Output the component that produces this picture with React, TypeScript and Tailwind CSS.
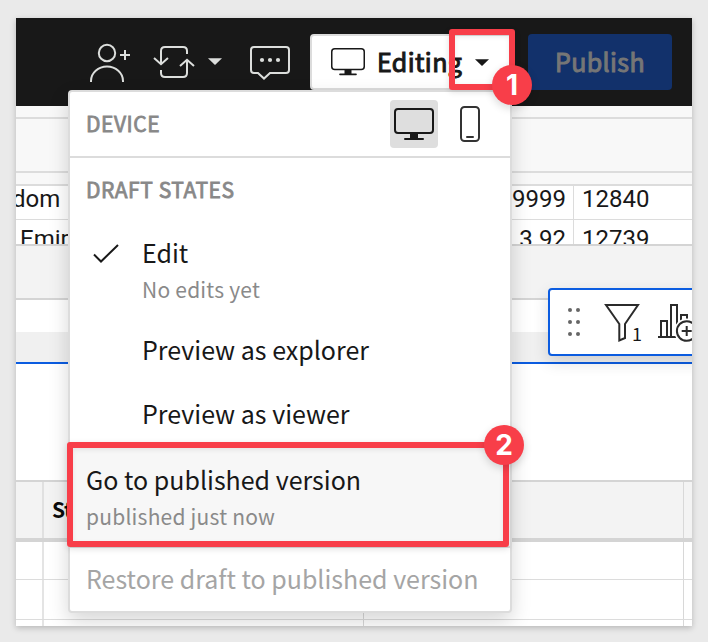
import type { ReactNode } from "react";

const SANS = "font-['Noto_Sans_CJK_SC','Noto_Sans',sans-serif]";

function AddUserIcon() {
  return (
    <svg width="42" height="42" viewBox="0 0 42 42" fill="none" stroke="#dcdedc" strokeWidth="2">
      <circle cx="17" cy="11" r="8.2" />
      <path d="M1 40v-1a16 14.5 0 0 1 32 0v1M30 13h10M35 8v10" />
    </svg>
  );
}

function SyncIcon() {
  return (
    <svg width="42" height="34" viewBox="0 0 42 34" className="overflow-visible" fill="none" stroke="#dcdedc" strokeWidth="2">
      <path d="M7 18V5q0-4 4-4h18q4 0 4 4v3M7 24v3q0 4 4 4h18q4 0 4-4V14" />
      <path d="M0 12l7 6.2L14 12M26 20l7-6.2 7 6.2" />
    </svg>
  );
}

function Caret({ className }: { className: string }) {
  return (
    <svg width="14" height="7" viewBox="0 0 14 7" className={className} fill="currentColor">
      <path d="M0 .3h14L7 7z" />
    </svg>
  );
}

function CommentIcon() {
  return (
    <svg width="40" height="36" viewBox="0 0 40 36" fill="none" stroke="#dcdedc" strokeWidth="2">
      <path d="M4 1h32q3 0 3 3v20q0 3-3 3H20l-6 5.6L8 27H4q-3 0-3-3V4q0-3 3-3z" />
      <g fill="#dcdedc" stroke="none">
        <circle cx="12" cy="14" r="2.1" />
        <circle cx="20" cy="14" r="2.1" />
        <circle cx="28" cy="14" r="2.1" />
      </g>
    </svg>
  );
}

function MonitorIcon() {
  return (
    <svg width="34" height="28" viewBox="0 0 34 28" fill="none" stroke="#181818">
      <rect x="0.75" y="0.75" width="32.5" height="20.7" rx="3" strokeWidth="1.5" />
      <path d="M13.5 22h7v4h-7z" fill="#181818" stroke="none" />
      <path d="M9 26.4h16" strokeWidth="1.6" strokeLinecap="round" />
    </svg>
  );
}

function MonitorLargeIcon() {
  return (
    <svg width="40" height="32" viewBox="0 0 40 32" fill="none" stroke="#181818" strokeWidth="2">
      <rect x="1" y="1" width="38" height="24" rx="3" />
      <path d="M16 25h8v5h-8z" fill="#181818" stroke="none" />
      <path d="M11 31h18" strokeLinecap="round" />
    </svg>
  );
}

function PhoneIcon() {
  return (
    <svg width="20" height="36" viewBox="0 0 20 36" fill="none" stroke="#333" strokeWidth="2">
      <rect x="1" y="1" width="18" height="34" rx="3.5" />
      <path d="M7 31h6" strokeLinecap="round" />
    </svg>
  );
}

function FilterIcon() {
  return (
    <svg width="38" height="40" viewBox="0 0 38 40" fill="none" stroke="#2b2b2b" strokeWidth="2">
      <path d="M3 2h32L22 21v14L16.3 37.5V21z" />
    </svg>
  );
}

function AddChartIcon() {
  return (
    <svg width="38" height="42" viewBox="0 0 38 42" className="shrink-0" fill="none" stroke="#2b2b2b" strokeWidth="2">
      <path d="M0 34h18M3 34V18h6v16M13 34V2h6v32M23 20v-8h6v8" />
      <circle cx="28.7" cy="28" r="12.5" fill="#fff" stroke="none" />
      <circle cx="28.7" cy="28" r="9.8" />
      <path d="M23.7 28h10M28.7 23v10" />
    </svg>
  );
}

function Badge({ children, className }: { children: ReactNode; className: string }) {
  return (
    <div
      className={`absolute flex size-10 items-center justify-center rounded-full bg-[#f83e49] pb-px font-[Inter,sans-serif] text-[28px] leading-none font-bold text-white shadow-[0_3px_8px_rgba(0,0,0,0.16)] ${className}`}
    >
      {children}
    </div>
  );
}

function TopBar() {
  return (
    <header className="flex h-[88px] shrink-0 items-start bg-[#181818]">
      <div className="mt-[24px] ml-[74px]">
        <AddUserIcon />
      </div>
      <div className="mt-[28px] ml-[22px]">
        <SyncIcon />
      </div>
      <Caret className="mt-[40px] ml-[12px] text-[#dcdedc]" />
      <div className="mt-[28px] ml-[28px]">
        <CommentIcon />
      </div>
      <button className="mt-4 ml-5 flex h-[56px] w-[204px] items-start rounded-[4px] border-2 border-[#dcdcdc] bg-white text-[#181818]">
        <span className="mt-[12px] ml-[19px] shrink-0">
          <MonitorIcon />
        </span>
        <span className="mt-[7px] ml-[12px] w-[90px] text-left text-[25px] leading-[36px] tracking-[0.4px] whitespace-nowrap [-webkit-text-stroke:1px_currentColor]">
          Editing
        </span>
        <Caret className="mt-[23px] ml-[8px] shrink-0" />
      </button>
      <button className="mt-4 ml-[14px] h-[56px] w-[144px] rounded-[4px] bg-[#12316b] pb-[2px] text-[25px] leading-[36px] tracking-[0.4px] text-[#767676] [-webkit-text-stroke:1px_currentColor]">
        Publish
      </button>
    </header>
  );
}

function FloatingToolbar() {
  return (
    <div className="absolute top-[270px] left-[532px] flex h-[68px] w-[180px] rounded-[4px] border-2 border-[#0b5ce0] bg-white shadow-[0_6px_16px_rgba(0,0,0,0.14)]">
      <div className="mt-[18px] ml-[18px] grid h-[28px] w-[12px] grid-cols-2 gap-x-[4px] gap-y-[8px]">
        {[0, 1, 2, 3, 4, 5].map((dot) => (
          <span key={dot} className="size-1 rounded-full bg-[#666]" />
        ))}
      </div>
      <div className="mt-[13px] ml-[23px] w-[36px] shrink-0">
        <FilterIcon />
      </div>
      <span className="mt-[31px] -ml-[7px] w-[10px] text-[18px] leading-[24px] text-[#181818]">1</span>
      <div className="mt-[13px] ml-[16px]">
        <AddChartIcon />
      </div>
    </div>
  );
}

function Sheet() {
  return (
    <div className="flex flex-col font-[Roboto,sans-serif] text-[24px] leading-[28px] text-[#181818]">
      <div className="h-[11px] bg-[#f8f8f8]" />
      <div className="h-[56px] border-y-2 border-[#dcdcdc] bg-[#f8f8f8]" />
      <div className="h-[13px] border-b-2 border-[#dcdcdc] bg-[#f8f8f8]" />
      <div className="flex h-[34px] overflow-hidden border-b border-[#dcdcdc] bg-white">
        <span className="-mt-px -ml-[4px] w-[52px] whitespace-nowrap">dom</span>
        <span className="ml-auto w-[80px] border-r border-[#dcdcdc] pr-[7px] text-right">
          <span className="relative -top-px">9999</span>
        </span>
        <span className="-mt-px w-[118px] pl-[8px]">12840</span>
      </div>
      <div className="flex h-[26px] border-b-2 border-[#d4d4d4] bg-white">
        <div className="flex h-[24px] w-full overflow-hidden">
          <span className="mt-[5px] ml-[4px] w-[100px] whitespace-nowrap">Emirates</span>
          <span className="ml-auto w-[80px] border-r border-[#dcdcdc] pt-[5px] pr-[7px] text-right">3.92</span>
          <span className="w-[118px] pt-[5px] pl-[8px]">12739</span>
        </div>
      </div>
      <div className="h-[54px] border-b-2 border-[#d4d4d4] bg-[#f3f3f3]" />
      <div className="h-[32px] bg-white" />
      <div className="h-[32px] border-b-2 border-[#0b5ce0] bg-[#f0f0f0]" />
      <div className="h-[116px] bg-white" />
      <div className="grid h-[62px] grid-cols-[28px_320px_320px_1fr] border-t-2 border-b-4 border-[#d4d4d4] bg-[#f3f3f3]">
        <div className="border-r-2 border-[#e0e0e0]" />
        <div className="border-r border-[#d8d8d8] pt-[13px] pl-[8px] font-['Noto_Sans_CJK_SC',sans-serif] text-[21px] font-bold tracking-[-0.5px] text-[#0c0c0c]">
          State
        </div>
        <div className="border-r border-[#d8d8d8]" />
        <div />
      </div>
      {["h-[38px]", "h-[40px]", "h-[40px]"].map((height, row) => (
        <div key={row} className={`grid shrink-0 grid-cols-[28px_320px_320px_1fr] border-b border-[#dcdcdc] bg-white ${height}`}>
          <div className="border-r-2 border-[#e4e4e4]" />
          <div className="border-r border-[#d8d8d8]" />
          <div className="border-r border-[#d8d8d8]" />
          <div />
        </div>
      ))}
    </div>
  );
}

function ModeMenu() {
  return (
    <div className="absolute top-[72px] left-[52px] flex h-[523px] w-[444px] flex-col rounded-[4px] border-2 border-[#dcdcdc] bg-white text-[#181818] shadow-[0_8px_20px_rgba(0,0,0,0.16)]">
      <div className="flex h-[66px] shrink-0 items-start border-b-2 border-[#dcdcdc] pl-4">
        <span className="mt-[15px] w-[304px] text-[21px] leading-[32px] tracking-[0.55px] text-[#888] [-webkit-text-stroke:0.8px_currentColor]">
          DEVICE
        </span>
        <button className="mt-[8px] flex size-12 items-center justify-center rounded-[4px] bg-[#dedede]">
          <MonitorLargeIcon />
        </button>
        <button className="mt-[14px] ml-[22px]">
          <PhoneIcon />
        </button>
      </div>
      <div className="mt-[15px] pl-4 text-[21px] leading-[32px] tracking-[0.55px] text-[#888] [-webkit-text-stroke:0.8px_currentColor]">
        DRAFT STATES
      </div>
      <div className="mt-[29px] flex h-[72px] pl-[23px]">
        <svg width="26" height="20" viewBox="0 0 26 20" className="mt-[10px]" fill="none" stroke="#181818" strokeWidth="2">
          <path d="M1 10.5l7 7L25 1" />
        </svg>
        <div className="ml-[23px]">
          <div className="text-[25px] leading-[36px]">Edit</div>
          <div className="mt-px text-[21px] leading-[36px] tracking-[0.22px] text-[#8a8a8a]">No edits yet</div>
        </div>
      </div>
      <div className="mt-[25px] pl-[72px] text-[25px] leading-[36px]">Preview as explorer</div>
      <div className="mt-[28px] pl-[72px] text-[25px] leading-[36px]">Preview as viewer</div>
      <div className="mt-[12px] h-[105px] border-y-2 border-[#dcdcdc] bg-[#f7f7f7] pt-[16px] pl-4">
        <div className="text-[25px] leading-[36px]">Go to published version</div>
        <div className="mt-px text-[21px] leading-[36px] tracking-[0.22px] text-[#8a8a8a]">published just now</div>
      </div>
      <div className="mt-[12px] pl-4 text-[25px] leading-[36px] whitespace-nowrap text-[#a5a5a5]">Restore draft to published version</div>
    </div>
  );
}

export default function App() {
  return (
    <div className={`relative h-[642px] w-[708px] overflow-hidden bg-[#eaeaea] px-4 pt-[18px] ${SANS}`}>
      <main className="relative flex h-[608px] flex-col overflow-hidden bg-white">
        <TopBar />
        <Sheet />
        <FloatingToolbar />
        <ModeMenu />
      </main>
      <div className="pointer-events-none absolute top-[18px] left-4 h-[608px] w-[676px] shadow-[0_2px_6px_rgba(0,0,0,0.22)]" />
      <div className="absolute top-[29px] left-[449px] h-[61px] w-[66px] rounded-[3px] border-6 border-[#f83e49] shadow-[0_2px_6px_rgba(0,0,0,0.12),inset_0_2px_5px_rgba(0,0,0,0.08)]" />
      <div className="absolute top-[442px] left-[67px] h-[105px] w-[442px] rounded-[3px] border-6 border-[#f83e49] shadow-[0_2px_6px_rgba(0,0,0,0.12),inset_0_2px_5px_rgba(0,0,0,0.08)]" />
      <Badge className="top-[65px] left-[492px]">1</Badge>
      <Badge className="top-[425px] left-[484px]">2</Badge>
    </div>
  );
}
